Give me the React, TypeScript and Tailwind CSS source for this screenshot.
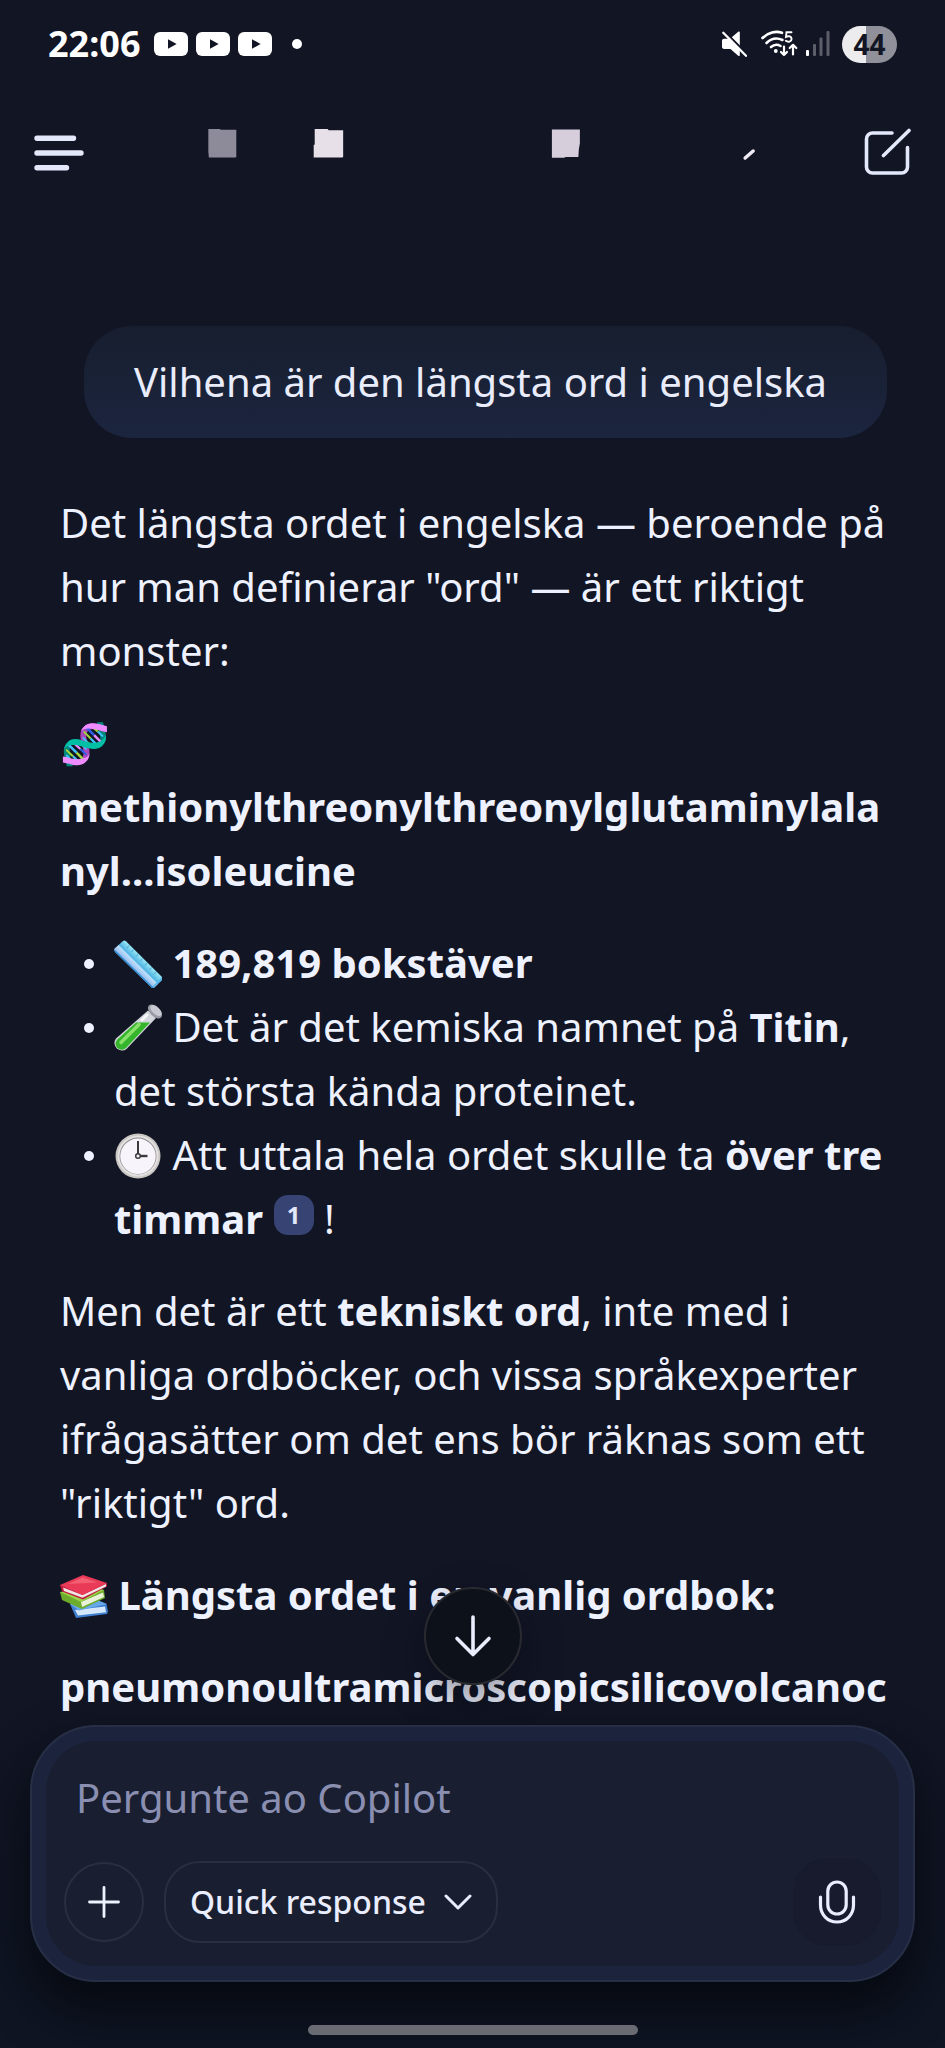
import type { ReactNode } from "react";

function YouTubeIcon() {
  return (
    <svg viewBox="0 0 34 24" className="h-6 w-[34px]" aria-hidden="true">
      <rect width="34" height="24" rx="6" fill="#fff" />
      <path d="M14 7.2v9.6l8.6-4.8z" fill="#121524" />
    </svg>
  );
}

function StatusBar() {
  return (
    <div className="flex h-22 shrink-0 items-center justify-between px-12 text-white">
      <div className="flex items-center">
        <span className="text-[36px] leading-none font-bold">22:06</span>
        <div className="ml-3.5 flex items-center gap-2">
          <YouTubeIcon />
          <YouTubeIcon />
          <YouTubeIcon />
        </div>
        <span className="ml-5 size-2.5 rounded-full bg-white" />
      </div>
      <div className="flex items-center">
        <svg viewBox="0 0 26 26" className="size-[26px]" aria-label="Muted" role="img">
          <path d="M1 10c0-1.300.8-2.200 2-2.200h5.500l10.300 9.700v6.500c0 1-.9 1.400-1.600.7L9.500 18H3c-1.200 0-2-.9-2-2.200z" fill="#fff" />
          <path d="M10.500 6.500 17.200.7c.6-.5 1.600-.2 1.600.7V15z" fill="#fff" />
          <path d="M4.500 1.500 26.500 23.500" stroke="#121524" strokeWidth="2.200" />
          <path d="M2.300 1.800 25 24.800" stroke="#fff" strokeWidth="2.300" strokeLinecap="round" />
        </svg>
        <svg viewBox="0 0 37 28" className="ml-3.5 h-7 w-[37px]" aria-label="Wi-Fi" role="img" fill="none" stroke="#fff" strokeLinecap="round">
          <path d="M1.500 8C7 2.200 15 .8 21 2.800" strokeWidth="2.600" />
          <path d="M5.500 13C10 8.600 16 7.400 21.500 10" strokeWidth="2.600" />
          <path d="M10 17c3-2.500 6.500-2.800 9.500-1" strokeWidth="2.600" />
          <circle cx="14.800" cy="21" r="1.900" fill="#fff" stroke="none" />
          <path d="M30.500 2.200h-5l-.5 4.600c2.800-1.400 5.600-.2 5.600 2.200 0 2.600-3.400 3.600-5.800 1.800" strokeWidth="1.900" />
          <path d="M23 16.500v8.500m-3-3 3 3 3-3" strokeWidth="2.200" strokeLinejoin="round" />
          <path d="M32 24.500V15m-3.300 3 3.300-3.200 3.300 3.200" strokeWidth="2.200" strokeLinejoin="round" />
        </svg>
        <svg viewBox="0 0 24 26" className="ml-2 h-[26px] w-6" aria-label="Signal" role="img">
          <rect x="0" y="19" width="3" height="6" rx="1" fill="#fff" />
          <rect x="7" y="13" width="3" height="12" rx="1" fill="#5c5e69" />
          <rect x="13.500" y="6.500" width="3" height="18.500" rx="1" fill="#5c5e69" />
          <rect x="20.500" y="0" width="3" height="25" rx="1" fill="#5c5e69" />
        </svg>
        <span className="ml-3 flex h-[37px] w-[55px] items-center justify-center rounded-full bg-linear-to-r from-[#ececee] from-44% to-[#8f9099] to-44% text-[28px] leading-none font-bold text-[#121524]">
          44
        </span>
      </div>
    </div>
  );
}

function NavBar() {
  return (
    <header className="flex h-32 shrink-0 items-center px-[34px]">
      <button type="button" aria-label="Menu" className="shrink-0">
        <svg viewBox="0 0 50 48" className="h-12 w-[50px]" stroke="#e4e8fb" strokeWidth="5.400" strokeLinecap="round">
          <path d="M3 10.200h36.500M3 25h44M3 39.700h29.500" />
        </svg>
      </button>
      <svg viewBox="0 0 780 48" className="h-12 min-w-0 flex-1" aria-hidden="true">
        <path d="M124.500 1h11.500l1 .8h15.500V29l-1 .5h-26.500l-.5-6z" fill="#8d8b9a" />
        <path d="M231 1h13l1 1.300h14.500v26.700l-1 .5h-28.500V17l1-.5z" fill="#e7e0e8" />
        <path d="M468.500 1.500h28v14l-1 5.500-.5 8h-13l-1 .7h-12.500z" fill="#d6cedb" />
        <path d="m662 30 8-7" stroke="#efeaf3" strokeWidth="3.500" strokeLinecap="round" />
      </svg>
      <button type="button" aria-label="New chat" className="shrink-0">
        <svg viewBox="0 0 48 48" className="size-12" fill="none" stroke="#e4e8fb" strokeWidth="3.600" strokeLinecap="round">
          <path d="M29 5H9.500A6 6 0 0 0 3.500 11v28a6 6 0 0 0 6 6h29a6 6 0 0 0 6-6V19.500" />
          <path d="M20.500 27.500 46 2.500" />
        </svg>
      </button>
    </header>
  );
}

function RulerEmoji() {
  return (
    <svg viewBox="0 0 48 48" className="inline-block size-12 align-[-10px]" role="img" aria-label="📏">
      <defs>
        <linearGradient id="ruler" x1="0.600" y1="0.400" x2="0.400" y2="0.600">
          <stop offset="0" stopColor="#8fe0f2" />
          <stop offset="0.450" stopColor="#4fb4e4" />
          <stop offset="0.550" stopColor="#bfe0fa" />
          <stop offset="1" stopColor="#8fb6ee" />
        </linearGradient>
      </defs>
      <path d="M0 9 9 1q1.500-1 3 .3L48 37v3l-8 8h-2L1 12q-1-1.500-1-3z" fill="url(#ruler)" />
      <path d="M0 9 38 46l2 2h-2L1 12z" fill="#2f8fd0" />
      <path d="m48 37-9 9v2l9-8z" fill="#58b7ea" />
      <path d="M15 5.500 13 8m6.500 1.500-2 2.500m6.500 2-2 2.500m6.500 2-2 2.500m6.500 2-2 2.500m6.500 2-2 2.500m6.500 2-2 2.500" stroke="#4aa6cf" strokeWidth="1" />
    </svg>
  );
}

function TubeEmoji() {
  return (
    <svg viewBox="0 0 48 48" className="inline-block size-12 align-[-10px]" role="img" aria-label="🧪">
      <path d="M34 6.500 42 14 12.500 45a7.500 7.500 0 0 1-10.500-10.500z" fill="#d3d6da" />
      <path d="M22 18.500h14L12 44a6 6 0 0 1-8.700-8.500z" fill="#35b52c" />
      <path d="M25 20.500 7 38.500" stroke="#8be06c" strokeWidth="3.500" strokeLinecap="round" />
      <path d="M33 11 28 16" stroke="#f5f6f8" strokeWidth="3" strokeLinecap="round" />
      <ellipse cx="41" cy="7.500" rx="8.500" ry="5" transform="rotate(44 41 7.500)" fill="#9a9ba6" />
      <ellipse cx="42" cy="6.500" rx="7" ry="3.600" transform="rotate(44 42 6.500)" fill="#c9c9d2" />
    </svg>
  );
}

function ClockEmoji() {
  return (
    <svg viewBox="0 0 48 48" className="inline-block size-12 align-[-10px]" role="img" aria-label="🕒">
      <circle cx="24" cy="24" r="22.500" fill="#c9c6c4" />
      <circle cx="24" cy="24" r="20.500" fill="#e3e1e1" />
      <circle cx="24" cy="24" r="18.500" fill="#8f8c8d" />
      <circle cx="24" cy="24.300" r="17.700" fill="#f7f5fb" />
      <path d="M24 24V9" stroke="#3a3a3d" strokeWidth="2" />
      <path d="M24 24h9.500" stroke="#3a3a3d" strokeWidth="2.400" />
      <circle cx="24" cy="24" r="2.300" fill="#f7f5fb" stroke="#3a3a3d" strokeWidth="1.500" />
    </svg>
  );
}

function BooksEmoji() {
  return (
    <svg viewBox="0 0 48 44" className="inline-block h-11 w-12 align-[-9px]" role="img" aria-label="📚">
      <path d="m10 29 6 14 31-4 1-2-1.500-8z" fill="#3f7fd0" />
      <path d="m15 35 3 5.500 28-3.300-1-5.700z" fill="#d5e8fb" />
      <path d="m10 29 25-5 12 5-28 6.500z" fill="#66a8ea" />
      <path d="m0 17 2 8 20 9 23-11-1-8z" fill="#6cab2b" />
      <path d="m21 27 22-9.500 1 4.500-22 10z" fill="#e9f2d8" />
      <path d="m0 17 21 10 23-12-8-3z" fill="#9bd24c" />
      <path d="m0 10 2 6.500 21 8 24-13V8z" fill="#c01a3c" />
      <path d="m3 12.500 19.500 7.500L46 9v2.500L22.500 22.800 4 16z" fill="#f0e6e6" />
      <path d="M0 10 23 0l24 8-24.500 12z" fill="#e93a58" />
      <path d="M8 9 22.500 2.500l15 5z" fill="#f25f72" />
    </svg>
  );
}

function Item({ children }: { children: ReactNode }) {
  return (
    <li className="flex">
      <span className="mt-7 mr-5 size-2.5 shrink-0 rounded-full bg-[#eef1fe]" />
      <div className="min-w-0">{children}</div>
    </li>
  );
}

function Conversation() {
  return (
    <main className="min-h-0 flex-1 overflow-hidden pt-[110px] pr-10 pl-[60px] text-[40px] leading-16 text-[#eef1fe]">
      <div className="mr-[18px] ml-6 rounded-[48px] bg-linear-to-b from-[#171e2f] to-[#1c253f] px-[50px] py-6 text-[#e9ecfb]">
        Vilhena är den längsta ord i engelska
      </div>
      <div className="mt-[53px] flex flex-col gap-7">
        <p>
          Det längsta ordet i engelska — beroende på hur man definierar "ord" — är ett riktigt monster:
        </p>
        <p>
          🧬
          <br />
          <strong>
            methionylthreonylthreonylglutaminylala
            <wbr />
            nyl...isoleucine
          </strong>
        </p>
        <ul className="pl-6">
          <Item>
            <RulerEmoji /> <strong>189,819 bokstäver</strong>
          </Item>
          <Item>
            <TubeEmoji /> Det är det kemiska namnet på <strong>Titin</strong>, det största kända proteinet.
          </Item>
          <Item>
            <ClockEmoji /> Att uttala hela ordet skulle ta <strong>över tre timmar</strong>{" "}
            <a
              href="#source-1"
              className="inline-flex size-10 items-center justify-center rounded-[14px] bg-[#364373] align-[10px] text-2xl leading-none font-bold text-[#e2e7fc]"
            >
              1
            </a>{" "}
            !
          </Item>
        </ul>
        <p>
          Men det är ett <strong>tekniskt ord</strong>, inte med i vanliga ordböcker, och vissa språkexperter
          ifrågasätter om det ens bör räknas som ett "riktigt" ord.
        </p>
        <p>
          <BooksEmoji /> <strong>Längsta ordet i en vanlig ordbok:</strong>
        </p>
        <p>
          <strong>pneumonoultramicroscopicsilicovolcanoc</strong>
        </p>
      </div>
    </main>
  );
}

function Composer() {
  return (
    <footer className="relative shrink-0 px-[30px]">
      <button
        type="button"
        aria-label="Scroll to latest"
        className="absolute -top-[138px] left-1/2 flex size-[98px] -translate-x-1/2 items-center justify-center rounded-full border-2 border-[#282a30] bg-[#0d1119] shadow-[0_16px_40px_rgba(4,7,14,0.4)]"
      >
        <svg viewBox="0 0 40 44" className="h-11 w-10" fill="none" stroke="#e9edfd" strokeWidth="3.600" strokeLinecap="round" strokeLinejoin="round">
          <path d="M20 3v37M4 24.500 20 40.500 36 24.500" />
        </svg>
      </button>
      <form className="relative rounded-[66px] border-2 border-[#272f47] bg-[#1c243d] p-3.5 shadow-[0_28px_48px_4px_rgba(4,7,12,0.75)]">
        <div className="rounded-[50px] bg-[#191f31] px-[18px] pt-6 pb-5">
          <input
            type="text"
            aria-label="Pergunte ao Copilot"
            placeholder="Pergunte ao Copilot"
            className="block h-16 w-full bg-transparent px-3 text-[40px] text-[#eef1fe] outline-none placeholder:text-[#8a8fb1]"
          />
          <div className="mt-[29px] flex items-center">
            <button type="button" aria-label="Add" className="flex size-20 items-center justify-center rounded-full border-2 border-[#292e40]">
              <svg viewBox="0 0 32 32" className="size-8" stroke="#eef1fe" strokeWidth="2.800" strokeLinecap="round">
                <path d="M16 1.500v29M1.500 16h29" />
              </svg>
            </button>
            <button
              type="button"
              className="ml-5 flex h-[82px] items-center rounded-[36px] border-2 border-[#292e40] px-6 text-[32px] leading-none font-medium text-[#e9edfd]"
            >
              Quick response
              <svg viewBox="0 0 28 18" className="ml-[18px] h-[18px] w-7" fill="none" stroke="#e9edfd" strokeWidth="3" strokeLinecap="round" strokeLinejoin="round">
                <path d="m2 3 12 12L26 3" />
              </svg>
            </button>
            <button type="button" aria-label="Voice" className="ml-auto flex size-[88px] items-center justify-center rounded-[34px] bg-[#171b2d]">
              <svg viewBox="0 0 40 44" className="h-11 w-10" fill="none" stroke="#e9edfd" strokeWidth="3.200" strokeLinecap="round">
                <rect x="10.800" y="2" width="18.400" height="32" rx="9.200" />
                <path d="M3.500 17v8c0 9.500 7 17 16.500 17s16.500-7.500 16.500-17v-8" />
              </svg>
            </button>
          </div>
        </div>
      </form>
      <div className="relative mx-auto mt-[43px] mb-[13px] h-2.5 w-[330px] rounded-full bg-[#6a6a72]" />
    </footer>
  );
}

export default function App() {
  return (
    <div className="flex h-screen flex-col overflow-hidden bg-linear-to-b from-[#121524] from-80% to-[#0f1523] font-['Noto_Sans','Liberation_Sans',sans-serif]">
      <StatusBar />
      <NavBar />
      <Conversation />
      <Composer />
    </div>
  );
}
